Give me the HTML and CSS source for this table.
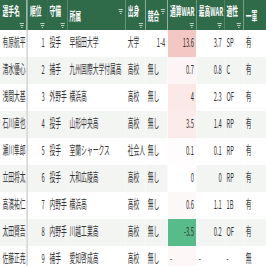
FILE: index.html
```html
<!DOCTYPE html>
<html lang="ja">
<head>
<meta charset="utf-8">
<link rel="stylesheet" href="styles.css">
</head>
<body>
<div class="frame">
<div class="sheet">
<table class="grid">
<colgroup>
<col class="c1"><col class="c2"><col class="c3"><col class="c4"><col class="c5"><col class="c6"><col class="c7"><col class="c8"><col class="c9"><col class="c10">
</colgroup>
<thead>
<tr>
<th class="frozen"><span>選手名</span><i class="flt"></i></th>
<th><span>順位</span><i class="flt"></i></th>
<th><span>守備</span><i class="flt"></i></th>
<th><span>所属</span><i class="flt"></i></th>
<th><span>出身</span><i class="flt"></i></th>
<th><span>競合</span><i class="flt"></i></th>
<th><span>通算WAR</span><i class="flt"></i></th>
<th><span>最高WAR</span><i class="flt"></i></th>
<th><span>適性</span><i class="flt"></i></th>
<th><span>一軍</span></th>
</tr>
</thead>
<tbody>
<tr><td class="frozen">有原航平</td><td class="num">1</td><td>投手</td><td>早稲田大学</td><td>大学</td><td class="num">1-4</td><td class="num w1">13.6</td><td class="num">3.7</td><td>SP</td><td>有</td></tr>
<tr><td class="frozen">清水優心</td><td class="num">2</td><td>捕手</td><td>九州国際大学付属高</td><td>高校</td><td>無し</td><td class="num w2">0.7</td><td class="num">0.8</td><td>C</td><td>有</td></tr>
<tr><td class="frozen">浅間大基</td><td class="num">3</td><td>外野手</td><td>横浜高</td><td>高校</td><td>無し</td><td class="num w3">4</td><td class="num">2.3</td><td>OF</td><td>有</td></tr>
<tr><td class="frozen">石川直也</td><td class="num">4</td><td>投手</td><td>山形中央高</td><td>高校</td><td>無し</td><td class="num w4">3.5</td><td class="num">1.4</td><td>RP</td><td>有</td></tr>
<tr><td class="frozen">瀬川隼郎</td><td class="num">5</td><td>投手</td><td>室蘭シャークス</td><td>社会人</td><td>無し</td><td class="num w5">0.1</td><td class="num">0.1</td><td>RP</td><td>有</td></tr>
<tr><td class="frozen">立田将太</td><td class="num">6</td><td>投手</td><td>大和広陵高</td><td>高校</td><td>無し</td><td class="num w6">0</td><td class="num">0</td><td>RP</td><td>有</td></tr>
<tr><td class="frozen">高濱祐仁</td><td class="num">7</td><td>内野手</td><td>横浜高</td><td>高校</td><td>無し</td><td class="num w7">0.6</td><td class="num">1.1</td><td>1B</td><td>有</td></tr>
<tr><td class="frozen">太田賢吾</td><td class="num">8</td><td>内野手</td><td>川越工業高</td><td>高校</td><td>無し</td><td class="num w8">-3.5</td><td class="num">0.2</td><td>OF</td><td>有</td></tr>
<tr><td class="frozen">佐藤正尭</td><td class="num">9</td><td>捕手</td><td>愛知啓成高</td><td>高校</td><td>無し</td><td class="w9">-</td><td>-</td><td>-</td><td>無</td></tr>
</tbody>
</table>
</div>
</div>
</body>
</html>
```
FILE: styles.css
```css
html, body {
  margin: 0;
  padding: 0;
  background: #ffffff;
  overflow: hidden;
}
.frame {
  width: 266px;
  height: 266px;
  overflow: hidden;
}
.sheet {
  width: 555px;
  transform: scaleX(0.48);
  transform-origin: 0 0;
  font-family: "Noto Sans CJK JP", "Noto Sans", sans-serif;
  font-size: 12px;
  color: #333333;
}
.grid {
  border-collapse: collapse;
  table-layout: fixed;
  width: 555px;
}
.c1 { width: 56px; }
.c2 { width: 42px; }
.c3 { width: 42px; }
.c4 { width: 121px; }
.c5 { width: 42px; }
.c6 { width: 46px; }
.c7 { width: 60px; }
.c8 { width: 58px; }
.c9 { width: 40px; }
.c10 { width: 48px; }

th {
  height: 27px;
  padding: 0 5px 1px 5px;
  background: #2f6a49;
  color: #ffffff;
  font-weight: bold;
  font-size: 12px;
  text-align: left;
  white-space: nowrap;
  overflow: hidden;
  box-sizing: border-box;
}
th span {
  display: inline-block;
  vertical-align: middle;
}
.flt {
  float: right;
  margin-top: 4px;
  width: 9px;
  height: 6px;
  background:
    linear-gradient(#b9d0c2, #b9d0c2) 0 0 / 9px 1px no-repeat,
    linear-gradient(#b9d0c2, #b9d0c2) 1px 2px / 7px 1px no-repeat,
    linear-gradient(#b9d0c2, #b9d0c2) 3px 4px / 3px 1px no-repeat;
}
th.frozen {
  border-right: 3px solid #5e8a70;
}
td {
  height: 27px;
  padding: 0 4px 4px 5px;
  white-space: nowrap;
  overflow: hidden;
  box-sizing: border-box;
}
tbody tr:nth-child(even) td {
  background: #f3f5f3;
}
td.frozen {
  border-right: 3px solid #d0d0d0;
}
td.num {
  text-align: right;
  padding-right: 5px;
}
tbody tr td.w1 { background: #f3c7c3; }
tbody tr td.w2 { background: #fdf5f5; }
tbody tr td.w3 { background: #fbe9e7; }
tbody tr td.w4 { background: #fbebea; }
tbody tr td.w5 { background: #fefcfc; }
tbody tr td.w6 { background: #ffffff; }
tbody tr td.w7 { background: #fdf8f8; }
tbody tr td.w8 { background: #57bb8a; }
tbody tr td.w9 { background: #fdf7f7; }
```
